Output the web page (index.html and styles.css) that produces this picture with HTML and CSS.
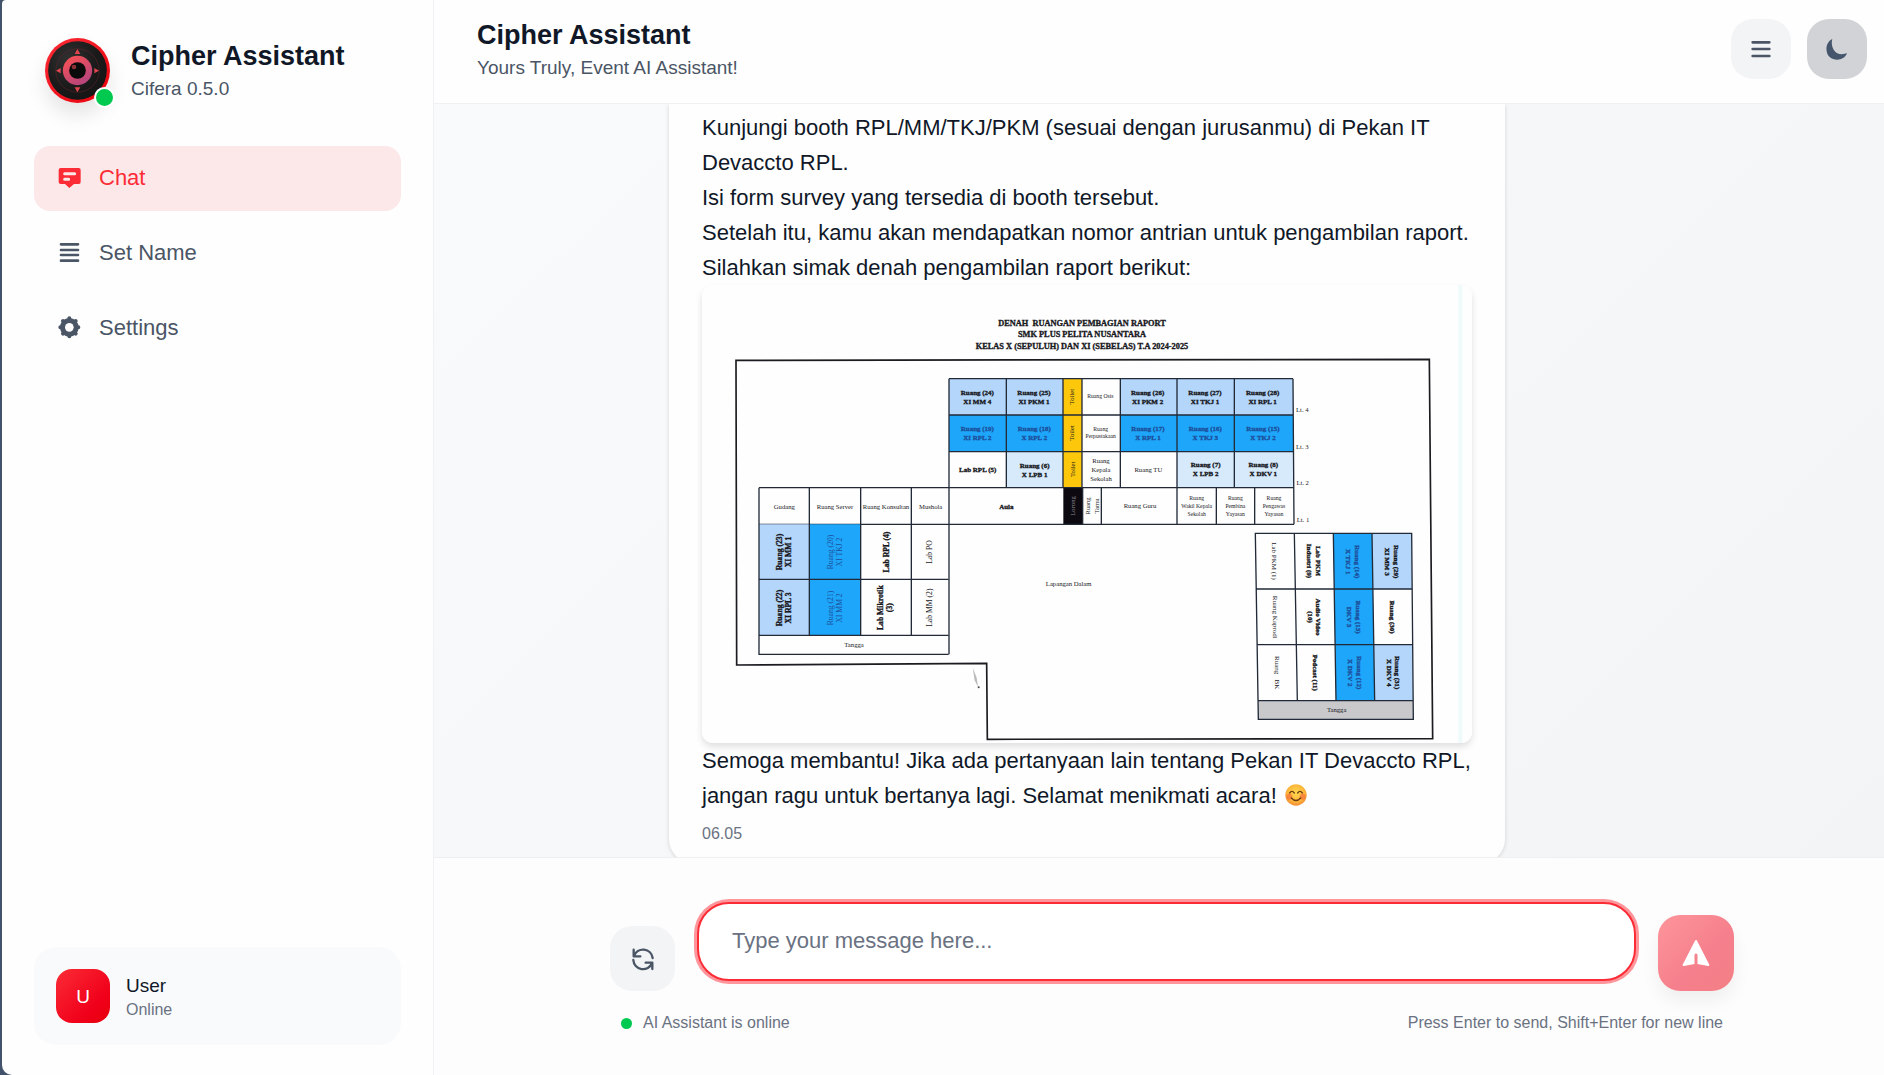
FILE: index.html
```html
<!DOCTYPE html>
<html lang="id">
<head>
<meta charset="utf-8">
<title>Cipher Assistant</title>
<meta name="viewport" content="width=device-width, initial-scale=1">
<link rel="stylesheet" href="styles.css">
</head>
<body>
<div class="app">
  <aside class="sidebar">
    <div class="brand">
      <div class="brand-logo">
        <svg class="logo" viewBox="0 0 195 195" aria-hidden="true">
          <defs>
            <linearGradient id="rim" x1="0" y1="0" x2="1" y2="1"><stop offset="0" stop-color="#fb2c36"/><stop offset="1" stop-color="#e7000b"/></linearGradient>
            <radialGradient id="face" cx=".35" cy=".3" r=".8"><stop offset="0" stop-color="#303030"/><stop offset=".6" stop-color="#1a1a1a"/><stop offset="1" stop-color="#141414"/></radialGradient>
            <linearGradient id="iris" x1="0" y1="0" x2=".6" y2="1"><stop offset="0" stop-color="#ff5350"/><stop offset="1" stop-color="#b5457c"/></linearGradient>
          </defs>
          <circle cx="97.5" cy="97.5" r="97.5" fill="url(#rim)"/>
          <circle cx="97.5" cy="97.5" r="88" fill="url(#face)"/>
          <circle cx="97.5" cy="97.5" r="65" fill="none" stroke="#7a2530" stroke-width="2" opacity=".6"/>
          <circle cx="97.5" cy="97.5" r="44" fill="url(#iris)"/>
          <circle cx="97.5" cy="97.5" r="25" fill="#0a0a0a"/>
          <circle cx="87" cy="87" r="7" fill="#8e2f38"/>
          <path d="M97 33l9 15H89zM97 163l9-15H89zM33 98l14-8v16zM162 98l-14-8v16z" fill="#e0454f"/>
        </svg>
        <span class="presence"></span>
      </div>
      <div>
        <h2 class="title">Cipher Assistant</h2>
        <p class="subtitle">Cifera 0.5.0</p>
      </div>
    </div>
    <nav class="nav">
      <a class="nav-item active" href="#chat">
        <svg class="nav-icon" viewBox="0 0 81 81" aria-hidden="true"><path d="M14 12h54q6 0 6 6v36q0 6-6 6H54L40 72 27 60H14q-6 0-6-6V18q0-6 6-6z" fill="currentColor"/><path d="M26 29h30M26 46h12" stroke="#fde8e9" stroke-width="9" stroke-linecap="round"/></svg>
        Chat
      </a>
      <a class="nav-item" href="#name">
        <svg class="nav-icon" viewBox="0 0 81 81" aria-hidden="true"><path d="M15 16h51M15 33h51M15 48h51M15 65h51" stroke="currentColor" stroke-width="8" stroke-linecap="round"/></svg>
        Set Name
      </a>
      <a class="nav-item" href="#settings">
        <svg class="nav-icon" viewBox="0 0 81 81" aria-hidden="true"><path d="M40 13v54M13 40h54M21 21l38 38M59 21L21 59" stroke="currentColor" stroke-width="12" stroke-linecap="round"/><circle cx="40" cy="40" r="20" fill="none" stroke="currentColor" stroke-width="16"/><circle cx="40" cy="40" r="13" fill="#fefefe"/></svg>
        Settings
      </a>
    </nav>
    <div class="user-card">
      <span class="avatar">U</span>
      <div>
        <p class="user-name">User</p>
        <p class="user-state">Online</p>
      </div>
    </div>
  </aside>

  <main class="main">
    <header class="topbar">
      <div>
        <h1 class="title">Cipher Assistant</h1>
        <p class="subtitle">Yours Truly, Event AI Assistant!</p>
      </div>
      <div class="tools">
        <button class="tool" type="button" aria-label="Menu">
          <svg class="icon" viewBox="0 0 72 72" aria-hidden="true"><path d="M11 16h50M11 36h50M11 57h50" stroke="currentColor" stroke-width="8" stroke-linecap="round"/></svg>
        </button>
        <button class="tool dark" type="button" aria-label="Dark mode">
          <svg class="icon" viewBox="0 0 72 72" aria-hidden="true"><path d="M22 6C0 16 0 48 14 60C30 74 58 70 66 49C50 54 34 52 26 38C20 28 19 16 22 6z" fill="currentColor"/></svg>
        </button>
      </div>
    </header>

    <section class="chat">
      <div class="column">
        <article class="bubble">
          <p>Kunjungi booth RPL/MM/TKJ/PKM (sesuai dengan jurusanmu) di Pekan IT Devaccto RPL.</p>
          <p>Isi form survey yang tersedia di booth tersebut.</p>
          <p>Setelah itu, kamu akan mendapatkan nomor antrian untuk pengambilan raport.</p>
          <p>Silahkan simak denah pengambilan raport berikut:</p>
          <svg class="plan" viewBox="0 0 2310 1374" role="img" aria-label="Denah ruangan pembagian raport">
            <rect width="2310" height="1374" fill="#fefefe"/>
            <rect x="2269" width="12" height="1374" fill="#effafa"/>
            <g class="heading">
              <text x="1140" y="123" xml:space="preserve">DENAH  RUANGAN PEMBAGIAN RAPORT</text>
              <text x="1140" y="157">SMK PLUS PELITA NUSANTARA</text>
              <text x="1140" y="191">KELAS X (SEPULUH) DAN XI (SEBELAS) T.A 2024-2025</text>
            </g>
            <path class="wall" d="M102 226L2182 223L2192 1361L856 1363L854 1135L104 1140z"/>
            <path d="M812 1148l12 30 4 28-10-20z" fill="#b9b9b9"/><circle cx="830" cy="1207" r="3" fill="#444"/>

            <!-- upper floors -->
            <path class="sky" d="M741 281h342v109H741zM1255 281h518v109h-518z"/>
            <path class="blue" d="M741 390h342v110H741zM1255 390h518v110h-518z"/>
            <path class="pale" d="M913 500h170v108H913zM1425 500h348v108h-348z"/>
            <path class="yellow" d="M1083 281h57v327h-57z"/>
            <path d="M1084 608h57v110h-57z" fill="#0c0a10"/>
            <path class="line" d="M741 281H1773M741 390H1773M741 500H1774M171 608H1775M171 718H1776M741 281V1108M913 281V608M1083 281V608M1140 281V608M1142 608V718M1255 281V608M1425 281V718M1597 281V608M1773 281L1776 718M1198 608V718M1543 608V718M1658 608V718"/>
            <g class="b20">
              <text x="826" y="330">Ruang (24)</text><text x="826" y="356">XI MM 4</text>
              <text x="996" y="330">Ruang (25)</text><text x="996" y="356">XI PKM 1</text>
              <text x="1337" y="330">Ruang (26)</text><text x="1337" y="356">XI PKM 2</text>
              <text x="1509" y="330">Ruang (27)</text><text x="1509" y="356">XI TKJ 1</text>
              <text x="1682" y="330">Ruang (28)</text><text x="1682" y="356">XI RPL 1</text>
              <text x="827" y="562">Lab RPL (5)</text>
              <text x="998" y="548">Ruang (6)</text><text x="998" y="575">X LPB 1</text>
              <text x="1511" y="547">Ruang (7)</text><text x="1511" y="573">X LPB 2</text>
              <text x="1684" y="547">Ruang (8)</text><text x="1684" y="573">X DKV 1</text>
              <text x="913" y="671">Aula</text>
            </g>
            <g class="b20 faded">
              <text x="826" y="439">Ruang (19)</text><text x="826" y="465">XI RPL 2</text>
              <text x="997" y="439">Ruang (18)</text><text x="997" y="465">X RPL 2</text>
              <text x="1338" y="439">Ruang (17)</text><text x="1338" y="465">X RPL 1</text>
              <text x="1510" y="439">Ruang (16)</text><text x="1510" y="465">X TKJ 3</text>
              <text x="1683" y="439">Ruang (15)</text><text x="1683" y="465">X TKJ 2</text>
            </g>
            <g class="r20">
              <text x="1339" y="561">Ruang TU</text>
              <text x="1197" y="535">Ruang</text><text x="1197" y="561">Kepala</text><text x="1197" y="587">Sekolah</text>
              <text x="1314" y="669">Ruang Guru</text>
              <text x="247" y="671">Gudang</text><text x="399" y="671">Ruang Server</text><text x="552" y="671">Ruang Konsultan</text><text x="686" y="671">Mushola</text>
              <text x="1801" y="381">Lt. 4</text><text x="1801" y="491">Lt. 3</text><text x="1802" y="600">Lt. 2</text><text x="1803" y="711">Lt. 1</text>
              <text x="1100" y="904">Lapangan Dalam</text>
              <text x="456" y="1087">Tangga</text>
            </g>
            <g class="r17">
              <text x="1195" y="340">Ruang Osis</text>
              <text x="1196" y="438">Ruang</text><text x="1196" y="460">Perpustakaan</text>
              <text x="1484" y="644">Ruang</text><text x="1484" y="668">Wakil Kepala</text><text x="1484" y="692">Sekolah</text>
              <text x="1600" y="644">Ruang</text><text x="1600" y="668">Pembina</text><text x="1600" y="692">Yayasan</text>
              <text x="1716" y="644">Ruang</text><text x="1716" y="668">Pengawas</text><text x="1716" y="692">Yayasan</text>
            </g>
            <g class="r20">
              <text transform="translate(1117 335) rotate(-90)">Toilet</text>
              <text transform="translate(1117 444) rotate(-90)">Toilet</text>
              <text transform="translate(1118 553) rotate(-90)">Toilet</text>
              <text transform="translate(1119 663) rotate(-90)" fill="#8d8a90" stroke="none">Lorong</text>
              <text transform="translate(1165 663) rotate(-90)">Ruang</text>
              <text transform="translate(1190 663) rotate(-90)">Tamu</text>
            </g>

            <!-- left wing -->
            <path class="sky" d="M171 718h151v333H171z"/>
            <path class="blue" d="M322 718h154v333H322z"/>
            <path class="line" d="M171 608V1108H740M171 883H740M171 1051H740M322 608V1051M476 608V1051M628 608V1051"/>
            <g class="b23">
              <text transform="translate(241 801) rotate(-90)">Ruang (23)</text><text transform="translate(267 801) rotate(-90)">XI MM 1</text>
              <text transform="translate(240 969) rotate(-90)">Ruang (22)</text><text transform="translate(266 969) rotate(-90)">XI RPL 3</text>
              <text transform="translate(560 801) rotate(-90)">Lab RPL (4)</text>
              <text transform="translate(543 968) rotate(-90)">Lab Mikrotik</text><text transform="translate(571 968) rotate(-90)">(3)</text>
            </g>
            <g class="r23 faded">
              <text transform="translate(394 801) rotate(-90)">Ruang (20)</text><text transform="translate(420 801) rotate(-90)">XI TKJ 2</text>
              <text transform="translate(393 969) rotate(-90)">Ruang (21)</text><text transform="translate(419 969) rotate(-90)">XI MM 2</text>
            </g>
            <g class="r23">
              <text transform="translate(691 801) rotate(-90)">Lab PO</text>
              <text transform="translate(691 968) rotate(-90)">Lab MM (2)</text>
            </g>

            <!-- right wing -->
            <path class="sky" d="M2010 745H2129L2130 912H2012zM2016 1079H2131L2133 1247H2018z"/>
            <path class="blue" d="M1894 745H2010L2018 1247H1902z"/>
            <path d="M1669 1247H2133V1303H1669z" fill="#c9c9cc"/>
            <path class="line" d="M1660 745H2129L2134 1303H1669zM1663 912H2130M1666 1079H2131M1669 1247H2133M1777 745L1786 1247M1894 745L1902 1247M2010 745L2018 1247"/>
            <g class="r21">
              <text transform="translate(1711 828) rotate(90)">Lab PKM (1)</text>
              <text transform="translate(1714 997) rotate(90)">Ruang Kaprodi</text>
              <text transform="translate(1718 1163) rotate(90)" xml:space="preserve">Ruang   BK</text>
            </g>
            <g class="b20">
              <text transform="translate(1841 828) rotate(90)">Lab PKM</text><text transform="translate(1816 828) rotate(90)">Industri (9)</text>
              <text transform="translate(1843 996) rotate(90)">Audio Video</text><text transform="translate(1818 996) rotate(90)">(10)</text>
              <text transform="translate(1833 1163) rotate(90)">Podcast (11)</text>
              <text transform="translate(2076 830) rotate(90)">Ruang (29)</text><text transform="translate(2050 830) rotate(90)">XI MM 3</text>
              <text transform="translate(2063 996) rotate(90)">Ruang (30)</text>
              <text transform="translate(2080 1163) rotate(90)">Ruang (31)</text><text transform="translate(2055 1163) rotate(90)">X DKV 4</text>
            </g>
            <g class="b20 faded">
              <text transform="translate(1958 830) rotate(90)">Ruang (14)</text><text transform="translate(1933 830) rotate(90)">X TKJ 1</text>
              <text transform="translate(1961 996) rotate(90)">Ruang (13)</text><text transform="translate(1936 996) rotate(90)">DKV 3</text>
              <text transform="translate(1964 1163) rotate(90)">Ruang (12)</text><text transform="translate(1939 1163) rotate(90)">X DKV 2</text>
            </g>
            <g class="r20"><text x="1904" y="1282">Tangga</text></g>
          </svg>
          <p>Semoga membantu! Jika ada pertanyaan lain tentang Pekan IT Devaccto RPL, jangan ragu untuk bertanya lagi. Selamat menikmati acara!
            <svg class="emoji" viewBox="0 0 66 66" role="img" aria-label="Smiling face"><defs><radialGradient id="smile" cx=".5" cy=".4" r=".6"><stop offset="0" stop-color="#ffd84f"/><stop offset=".7" stop-color="#fdb43a"/><stop offset="1" stop-color="#f08a34"/></radialGradient></defs><circle cx="33" cy="33" r="32" fill="url(#smile)"/><circle cx="13" cy="38" r="9" fill="#f5663c" opacity=".6"/><circle cx="53" cy="38" r="9" fill="#f5663c" opacity=".6"/><path d="M14 27q7-10 14 0M38 27q7-10 14 0M19 42q14 15 28 0" fill="none" stroke="#6b3a12" stroke-width="4" stroke-linecap="round"/></svg>
          </p>
          <time class="time">06.05</time>
        </article>
      </div>
    </section>

    <footer class="composer">
      <form class="column">
        <div class="compose-row">
          <button class="refresh" type="button" aria-label="Reset chat">
            <svg class="icon" viewBox="0 0 72 72" aria-hidden="true"><path d="M8 8V28H28M9 27A29 29 0 0 1 65 33M64 66V47H44M7 39A29 29 0 0 0 63 48" fill="none" stroke="currentColor" stroke-width="7" stroke-linecap="round" stroke-linejoin="round"/></svg>
          </button>
          <div class="field"><textarea class="message" rows="1" aria-label="Message" placeholder="Type your message here..."></textarea></div>
          <button class="send" type="submit" aria-label="Send">
            <svg class="send-icon" viewBox="0 0 96 96" aria-hidden="true"><path d="M48 12L85 84L53 78V52Q48 44 43 52V78L11 84z" fill="#fff" stroke="#fff" stroke-width="6" stroke-linejoin="round"/><path d="M48 54V82" stroke="#f5838d" stroke-width="9" stroke-linecap="round"/></svg>
          </button>
        </div>
        <div class="status">
          <span class="online"><span class="dot"></span>AI Assistant is online</span>
          <span>Press Enter to send, Shift+Enter for new line</span>
        </div>
      </form>
    </footer>
  </main>
</div>
</body>
</html>
```
FILE: styles.css
```css
* { box-sizing: border-box; }
body {
  margin: 0;
  background: #43536b;
  color: #101828;
  font-family: "Liberation Sans", Arial, sans-serif;
  font-size: 22px;
  line-height: 35px;
}
h1, h2, p { margin: 0; }
button { border: 0; padding: 0; font: inherit; color: #4a5565; display: grid; place-items: center; flex: none; }
svg { display: block; }

.app {
  display: flex;
  height: 100vh;
  margin-left: 2px;
  background: #fefefe;
  border-radius: 4px 0 0 10px;
  overflow: hidden;
}

.sidebar {
  flex: none;
  width: 432px;
  display: flex;
  flex-direction: column;
  padding: 37px 32px 30px;
  border-right: 1px solid #f0f1f4;
}
.brand { display: flex; align-items: center; gap: 21px; padding-left: 11px; margin-bottom: 43px; }
.brand-logo { position: relative; width: 65px; border-radius: 50%; box-shadow: 0 12px 20px rgba(0, 0, 0, .1); }
.logo { width: 65px; height: 65px; }
.presence {
  position: absolute;
  right: -5px;
  bottom: -5px;
  width: 21px;
  height: 21px;
  border: 2px solid #fff;
  border-radius: 50%;
  background: #00c950;
}
.title { font-size: 27px; line-height: 38px; font-weight: 700; }
.subtitle { font-size: 19px; line-height: 28px; color: #4a5565; }

.nav { display: flex; flex-direction: column; gap: 10px; flex: 1; }
.nav-item {
  display: flex;
  align-items: center;
  gap: 16px;
  height: 65px;
  padding: 0 22px 2px;
  border-radius: 16px;
  color: #4a5565;
  text-decoration: none;
}
.nav-item.active { background: #fde8e9; color: #fb2c36; }
.nav-icon { width: 27px; height: 27px; }

.user-card { display: flex; align-items: center; gap: 16px; padding: 22px; border-radius: 22px; background: #f9fafb; }
.avatar {
  display: grid;
  place-items: center;
  width: 54px;
  height: 54px;
  border-radius: 16px;
  background: linear-gradient(135deg, #fb2c36, #f0001a 70%, #e7000b);
  color: #fff;
  font-size: 19px;
}
.user-name { font-size: 19px; line-height: 27px; }
.user-state { font-size: 16px; line-height: 22px; color: #6a7282; }

.main { flex: 1; min-width: 0; display: flex; flex-direction: column; }
.topbar {
  display: flex;
  justify-content: space-between;
  align-items: center;
  padding: 16px 17px 21px 43px;
  border-bottom: 1px solid #eef0f2;
}
.tools { display: flex; gap: 16px; }
.tool { width: 60px; height: 60px; border-radius: 22px; background: #f3f4f6; }
.tool.dark { background: #d1d3d7; color: #45556c; }
.icon { width: 24px; height: 24px; }

.chat {
  flex: 1;
  min-height: 0;
  overflow: hidden;
  padding-left: 26px;
  background: linear-gradient(135deg, #f9fafb, #f3f4f6);
}
.column { width: 100%; max-width: 1124px; margin: 0 auto; }
.bubble {
  max-width: 836px;
  margin-left: 59px;
  padding: 6px 33px 18px;
  border-radius: 0 0 24px 24px;
  background: #fefefe;
  box-shadow: 0 1px 4px rgba(0, 0, 0, .14);
}
.time { display: block; margin-top: 10px; font-size: 16px; line-height: 22px; color: #6a7282; }
.emoji { display: inline-block; width: 22px; height: 22px; margin-left: 2px; vertical-align: -3px; }

.plan { width: 100%; height: auto; border-radius: 11px; box-shadow: 0 4px 7px rgba(0, 0, 0, .12); font-family: "Liberation Serif", "Times New Roman", serif; }
.plan text { text-anchor: middle; }
.plan g { fill: #17171c; stroke: #17171c; stroke-width: 0; }
.plan .heading { font-size: 25px; font-weight: 700; stroke-width: 1px; }
.plan .b20 { font-size: 21px; font-weight: 700; stroke-width: 1px; }
.plan .b23 { font-size: 23px; font-weight: 700; stroke-width: 1px; }
.r17 { font-size: 17px; }
.r20 { font-size: 20px; }
.r21 { font-size: 21px; }
.r23 { font-size: 23px; }
.plan .faded { fill: #1c4f9c; stroke: #1c4f9c; }
.wall { fill: none; stroke: #1b1b20; stroke-width: 5; }
.line { fill: none; stroke: #222a38; stroke-width: 4; }
.sky { fill: #b4d6fb; }
.blue { fill: #1ea7fa; }
.pale { fill: #d6eafc; }
.yellow { fill: #fdc80c; }

.composer { padding: 44px 0 41px 26px; border-top: 1px solid #eeeff1; background: #fdfdfd; }
.compose-row { display: flex; align-items: flex-end; gap: 22px; }
.refresh { width: 65px; height: 65px; border-radius: 22px; background: #f3f4f6; }
.field { flex: 1; min-width: 0; padding-bottom: 10px; }
.message {
  display: block;
  width: 100%;
  height: 79px;
  padding: 19px 33px;
  border: 2px solid #fb2c36;
  border-radius: 32px;
  outline: 0;
  box-shadow: 0 0 0 3px #fd959b;
  background: #fff;
  color: #101828;
  font: inherit;
  resize: none;
  overflow: hidden;
}
.message::placeholder { color: #6a7282; }
.send {
  width: 76px;
  height: 76px;
  border-radius: 22px;
  background: linear-gradient(135deg, #fd959b, #f57f8c 60%, #f37f85);
  box-shadow: 0 10px 18px rgba(0, 0, 0, .06);
}
.send-icon { width: 32px; height: 32px; }
.status { display: flex; justify-content: space-between; margin-top: 21px; padding: 0 11px; font-size: 16px; line-height: 22px; color: #6a7282; }
.online { display: flex; align-items: center; gap: 11px; }
.dot { width: 11px; height: 11px; border-radius: 50%; background: #00c950; }
```
